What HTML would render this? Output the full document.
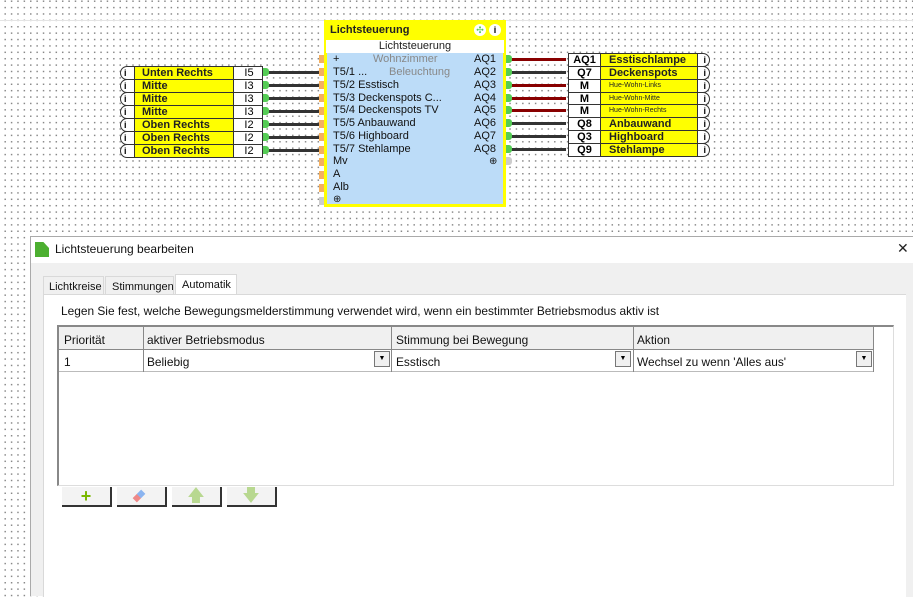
<!DOCTYPE html>
<html><head><meta charset="utf-8"><style>
*{box-sizing:border-box;margin:0;padding:0}
body{width:913px;height:596px;overflow:hidden;position:relative;font-family:"Liberation Sans",sans-serif;background:#fff;
background-image:radial-gradient(circle,#888 0.7px,transparent 0.9px);background-size:6.4px 6.4px;background-position:2px -2px}
.a{position:absolute}
.in{position:absolute;left:120px;width:143px;height:14px;border:1px solid #333;background:#fff;font-size:11px;font-weight:bold;line-height:12px;border-radius:7px 0 0 7px}
.in span,.out span{display:block}
.in .y{position:absolute;left:13px;top:0;width:100px;height:12px;background:#ff0;border-left:1px solid #333;border-right:1px solid #333;padding-left:7px;color:#222}
.in .l{position:absolute;left:114px;top:0;width:28px;text-align:center;font-weight:normal}
.in .i{position:absolute;left:3px;top:0;font-size:9px}
.out{position:absolute;left:568px;width:142px;height:14px;border:1px solid #333;background:#fff;font-size:11px;font-weight:bold;line-height:12px;border-radius:0 7px 7px 0}
.out .l{position:absolute;left:0;top:0;width:31px;text-align:center}
.out .y{position:absolute;left:31px;top:0;width:98px;height:12px;background:#ff0;border-left:1px solid #333;border-right:1px solid #333;padding-left:8px;color:#222}
.out .y.s{font-size:7px;font-weight:normal;line-height:12px}
.out .i{position:absolute;right:3px;top:0;font-size:9px}
.ln{position:absolute;height:3px;background:#333}
.g{position:absolute;width:6px;height:8px;background:#5c5;border-radius:0 3px 3px 0}
.o{position:absolute;width:5px;height:8px;background:#f5b060}
.blk{position:absolute;left:324px;top:20px;width:182px;height:187px;background:#ff0}
.blue{position:absolute;left:3px;top:33px;width:176px;height:151px;background:#bcdcf8;font-size:11px;color:#111}
.blue div{position:absolute;line-height:13px}
.dlg{position:absolute;left:30px;top:236px;width:883px;height:360px;background:#f0f0f0;border-left:1px solid #aaa;border-top:1px solid #aaa}
.ui{font-size:11.9px;color:#111}
.dd{position:absolute;width:16px;height:16px;border:1px solid #777;background:#f0f0f0;font-size:7px;text-align:center;line-height:14px}
</style></head><body>
<div class="a" style="left:0;top:20px;width:913px;height:1px;background:#e4e4e4"></div>

<div class="in" style="top:66px"><span class="i">i</span><span class="y">Unten Rechts</span><span class="l">I5</span></div>
<div class="in" style="top:79px"><span class="i">i</span><span class="y">Mitte</span><span class="l">I3</span></div>
<div class="in" style="top:92px"><span class="i">i</span><span class="y">Mitte</span><span class="l">I3</span></div>
<div class="in" style="top:105px"><span class="i">i</span><span class="y">Mitte</span><span class="l">I3</span></div>
<div class="in" style="top:118px"><span class="i">i</span><span class="y">Oben Rechts</span><span class="l">I2</span></div>
<div class="in" style="top:131px"><span class="i">i</span><span class="y">Oben Rechts</span><span class="l">I2</span></div>
<div class="in" style="top:144px"><span class="i">i</span><span class="y">Oben Rechts</span><span class="l">I2</span></div>
<div class="ln" style="left:266px;top:71px;width:56px"></div><div class="g" style="left:263px;top:68px"></div>
<div class="ln" style="left:266px;top:84px;width:56px"></div><div class="g" style="left:263px;top:81px"></div>
<div class="ln" style="left:266px;top:97px;width:56px"></div><div class="g" style="left:263px;top:94px"></div>
<div class="ln" style="left:266px;top:110px;width:56px"></div><div class="g" style="left:263px;top:107px"></div>
<div class="ln" style="left:266px;top:123px;width:56px"></div><div class="g" style="left:263px;top:120px"></div>
<div class="ln" style="left:266px;top:136px;width:56px"></div><div class="g" style="left:263px;top:133px"></div>
<div class="ln" style="left:266px;top:149px;width:56px"></div><div class="g" style="left:263px;top:146px"></div>

<div class="blk">
 <div class="a" style="left:6px;top:4px;font-size:11px;font-weight:bold;color:#222">Lichtsteuerung</div>
 <div class="a" style="left:150px;top:4px;width:12px;height:12px;border-radius:6px;background:#fff;color:#5c5;font-size:9px;text-align:center;line-height:12px">✣</div>
 <div class="a" style="left:165px;top:4px;width:12px;height:12px;border-radius:6px;background:#fff;font-size:9px;font-weight:bold;text-align:center;line-height:12px">i</div>
 <div class="a" style="left:2px;top:20px;width:178px;height:13px;background:#fff;font-size:11px;text-align:center;line-height:13px;color:#222">Lichtsteuerung</div>
 <div class="blue">
  <div style="left:6px;top:0">+</div><div style="left:46px;top:0;color:#888">Wohnzimmer</div>
  <div style="left:6px;top:13px">T5/1 ...</div><div style="left:62px;top:13px;color:#888">Beleuchtung</div>
  <div style="left:6px;top:26px">T5/2 Esstisch</div>
  <div style="left:6px;top:39px">T5/3 Deckenspots C...</div>
  <div style="left:6px;top:51px">T5/4 Deckenspots TV</div>
  <div style="left:6px;top:64px">T5/5 Anbauwand</div>
  <div style="left:6px;top:77px">T5/6 Highboard</div>
  <div style="left:6px;top:90px">T5/7 Stehlampe</div>
  <div style="left:6px;top:102px">Mv</div>
  <div style="left:6px;top:115px">A</div>
  <div style="left:6px;top:128px">Alb</div>
  <div style="left:6px;top:140px;font-size:10px">⊕</div>
  <div style="left:147px;top:0">AQ1</div><div style="left:147px;top:13px">AQ2</div><div style="left:147px;top:26px">AQ3</div><div style="left:147px;top:39px">AQ4</div>
  <div style="left:147px;top:51px">AQ5</div><div style="left:147px;top:64px">AQ6</div><div style="left:147px;top:77px">AQ7</div><div style="left:147px;top:90px">AQ8</div>
  <div style="left:162px;top:102px;font-size:10px">⊕</div>
 </div>
</div>
<div class="o" style="left:319px;top:55px"></div><div class="o" style="left:319px;top:68px"></div><div class="o" style="left:319px;top:81px"></div><div class="o" style="left:319px;top:94px"></div><div class="o" style="left:319px;top:107px"></div><div class="o" style="left:319px;top:120px"></div><div class="o" style="left:319px;top:133px"></div><div class="o" style="left:319px;top:146px"></div><div class="o" style="left:319px;top:158px"></div><div class="o" style="left:319px;top:171px"></div><div class="o" style="left:319px;top:184px"></div><div class="o" style="left:319px;top:197px;background:#ccc"></div>

<div class="ln" style="left:510px;top:58px;width:56px;background:#800"></div><div class="g" style="left:506px;top:55px"></div>
<div class="ln" style="left:510px;top:71px;width:56px"></div><div class="g" style="left:506px;top:68px"></div>
<div class="ln" style="left:510px;top:84px;width:56px;background:#800"></div><div class="g" style="left:506px;top:81px"></div>
<div class="ln" style="left:510px;top:97px;width:56px;background:#800"></div><div class="g" style="left:506px;top:94px"></div>
<div class="ln" style="left:510px;top:109px;width:56px;background:#800"></div><div class="g" style="left:506px;top:106px"></div>
<div class="ln" style="left:510px;top:122px;width:56px"></div><div class="g" style="left:506px;top:119px"></div>
<div class="ln" style="left:510px;top:135px;width:56px"></div><div class="g" style="left:506px;top:132px"></div>
<div class="ln" style="left:510px;top:148px;width:56px"></div><div class="g" style="left:506px;top:145px"></div>
<div class="g" style="left:506px;top:157px;background:#ccc"></div>

<div class="out" style="top:53px"><span class="l">AQ1</span><span class="y">Esstischlampe</span><span class="i">i</span></div>
<div class="out" style="top:66px"><span class="l">Q7</span><span class="y">Deckenspots</span><span class="i">i</span></div>
<div class="out" style="top:79px"><span class="l">M</span><span class="y s">Hue-Wohn-Links</span><span class="i">i</span></div>
<div class="out" style="top:92px"><span class="l">M</span><span class="y s">Hue-Wohn-Mitte</span><span class="i">i</span></div>
<div class="out" style="top:104px"><span class="l">M</span><span class="y s">Hue-Wohn-Rechts</span><span class="i">i</span></div>
<div class="out" style="top:117px"><span class="l">Q8</span><span class="y">Anbauwand</span><span class="i">i</span></div>
<div class="out" style="top:130px"><span class="l">Q3</span><span class="y">Highboard</span><span class="i">i</span></div>
<div class="out" style="top:143px"><span class="l">Q9</span><span class="y">Stehlampe</span><span class="i">i</span></div>

<div class="dlg">
 <div class="a" style="left:0;top:0;width:883px;height:26px;background:#fff"></div>
 <div class="a" style="left:4px;top:5px;width:14px;height:15px;background:#4caf30;clip-path:polygon(0 0,60% 0,100% 40%,100% 100%,0 100%)"></div>
 <div class="a ui" style="left:24px;top:5px;font-size:12px">Lichtsteuerung bearbeiten</div>
 <div class="a" style="left:866px;top:3px;font-size:14px;color:#222">✕</div>
 <div class="a ui" style="left:12px;top:39px;width:61px;height:19px;border:1px solid #d9d9d9;font-size:11px;padding:4px 0 0 5px">Lichtkreise</div>
 <div class="a ui" style="left:74px;top:39px;width:69px;height:19px;border:1px solid #d9d9d9;font-size:11px;padding:4px 0 0 6px">Stimmungen</div>
 <div class="a ui" style="left:144px;top:37px;width:62px;height:22px;border:1px solid #d9d9d9;border-bottom:none;background:#fff;font-size:11px;padding:4px 0 0 6px">Automatik</div>
 <div class="a" style="left:12px;top:57px;width:863px;height:303px;background:#fff;border-left:1px solid #d9d9d9;border-top:1px solid #d9d9d9"></div>
 <div class="a ui" style="left:30px;top:67px">Legen Sie fest, welche Bewegungsmelderstimmung verwendet wird, wenn ein bestimmter Betriebsmodus aktiv ist</div>
 <div class="a" style="left:26px;top:88px;width:837px;height:161px;border:1px solid #ddd;border-top:2px solid #888;border-left:2px solid #888;background:#fff"></div>
 <div class="a" style="left:28px;top:90px;width:814px;height:23px;background:#f0f0f0;border-bottom:1px solid #888"></div>
 <div class="a" style="left:28px;top:113px;width:814px;height:22px;border-bottom:1px solid #bbb"></div>
 <div class="a" style="left:112px;top:90px;width:1px;height:45px;background:#888"></div>
 <div class="a" style="left:360px;top:90px;width:1px;height:45px;background:#888"></div>
 <div class="a" style="left:602px;top:90px;width:1px;height:45px;background:#888"></div>
 <div class="a" style="left:842px;top:90px;width:1px;height:45px;background:#888"></div>
 <div class="a ui" style="left:33px;top:96px">Priorität</div>
 <div class="a ui" style="left:116px;top:96px">aktiver Betriebsmodus</div>
 <div class="a ui" style="left:365px;top:96px">Stimmung bei Bewegung</div>
 <div class="a ui" style="left:606px;top:96px">Aktion</div>
 <div class="a ui" style="left:33px;top:118px">1</div>
 <div class="a ui" style="left:116px;top:118px">Beliebig</div>
 <div class="a ui" style="left:365px;top:118px">Esstisch</div>
 <div class="a ui" style="left:606px;top:118px">Wechsel zu wenn 'Alles aus'</div>
 <div class="dd" style="left:343px;top:114px">▼</div>
 <div class="dd" style="left:584px;top:114px">▼</div>
 <div class="dd" style="left:825px;top:114px">▼</div>
 <div class="a" style="left:31px;top:250px;width:50px;height:20px;background:#f3f3f3;border-right:2px solid #333;border-bottom:2px solid #333;color:#7ab800;font-size:18px;font-weight:bold;text-align:center;line-height:18px">+</div>
 <div class="a" style="left:86px;top:250px;width:50px;height:20px;background:#f3f3f3;border-right:2px solid #333;border-bottom:2px solid #333"><div class="a" style="left:19px;top:3px;width:6px;height:12px;background:linear-gradient(#8ab4f0 50%,#ee8888 50%);transform:rotate(45deg)"></div></div>
 <div class="a" style="left:141px;top:250px;width:50px;height:20px;background:#f3f3f3;border-right:2px solid #333;border-bottom:2px solid #333;color:#b8d890;font-size:17px;text-align:center;line-height:18px">🡅</div>
 <div class="a" style="left:196px;top:250px;width:50px;height:20px;background:#f3f3f3;border-right:2px solid #333;border-bottom:2px solid #333;color:#b8d890;font-size:17px;text-align:center;line-height:18px">🡇</div>
 <div class="a" style="left:875px;top:57px;width:8px;height:303px;background:#f0f0f0"></div>
</div>
</body></html>
